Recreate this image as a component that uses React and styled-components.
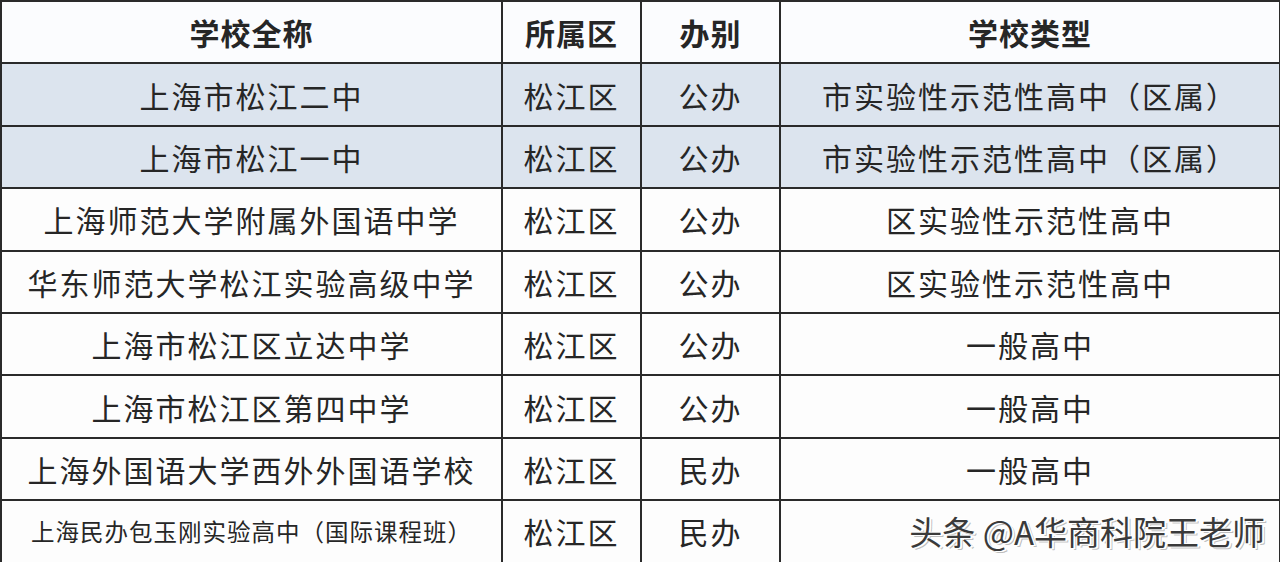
import React from "react";
import styled, { createGlobalStyle } from "styled-components";

const GlobalStyle = createGlobalStyle`
  html, body {
    margin: 0;
    padding: 0;
    background: #ffffff;
    overflow: hidden;
  }
  body {
    font-family: "Noto Sans CJK SC", "Noto Sans", sans-serif;
  }
`;

const Page = styled.div`
  width: 1280px;
  height: 562px;
  overflow: hidden;
`;

const Table = styled.table`
  width: 1279px;
  border-collapse: collapse;
  table-layout: fixed;
  color: #262626;
`;

const Row = styled.tr`
  height: 62.4px;
  background: ${({ $highlight }) => ($highlight ? "#dce4ee" : "#fdfdfd")};
`;

const HeadCell = styled.th`
  border: 2px solid #2a2a2a;
  font-size: 30px;
  font-weight: 700;
  text-align: center;
  padding: 0;
  letter-spacing: 1px;
  background: #fbfcfe;
`;

const Cell = styled.td`
  border: 2px solid #2a2a2a;
  font-size: ${({ $small }) => ($small ? "23.5px" : "30px")};
  letter-spacing: ${({ $small }) => ($small ? "1px" : "2px")};
  text-align: center;
  padding: 0;
  white-space: nowrap;
  line-height: 1;
`;

const WatermarkCell = styled(Cell)`
  text-align: right;
  padding-right: 14px;
`;

const Watermark = styled.span`
  font-size: 33px;
  letter-spacing: 0;
  color: #3a3a3a;
  text-shadow: 2px 1px 0 #ffffff, -1px -1px 0 #ffffff, 3px 2px 0 rgba(0, 0, 0, 0.25);
`;

const rows = [
  ["上海市松江二中", "松江区", "公办", "市实验性示范性高中（区属）", true],
  ["上海市松江一中", "松江区", "公办", "市实验性示范性高中（区属）", true],
  ["上海师范大学附属外国语中学", "松江区", "公办", "区实验性示范性高中"],
  ["华东师范大学松江实验高级中学", "松江区", "公办", "区实验性示范性高中"],
  ["上海市松江区立达中学", "松江区", "公办", "一般高中"],
  ["上海市松江区第四中学", "松江区", "公办", "一般高中"],
  ["上海外国语大学西外外国语学校", "松江区", "民办", "一般高中"],
];

const App = () => {
  return (
    <Page>
      <GlobalStyle />
      <Table>
        <colgroup>
          <col style={{ width: 501 }} />
          <col style={{ width: 139 }} />
          <col style={{ width: 139 }} />
          <col style={{ width: 500 }} />
        </colgroup>
        <thead>
          <Row>
            <HeadCell>学校全称</HeadCell>
            <HeadCell>所属区</HeadCell>
            <HeadCell>办别</HeadCell>
            <HeadCell>学校类型</HeadCell>
          </Row>
        </thead>
        <tbody>
          {rows.map(([name, area, kind, type, hl]) => (
            <Row key={name} $highlight={hl}>
              <Cell>{name}</Cell>
              <Cell>{area}</Cell>
              <Cell>{kind}</Cell>
              <Cell>{type}</Cell>
            </Row>
          ))}
          <Row>
            <Cell $small>上海民办包玉刚实验高中（国际课程班）</Cell>
            <Cell>松江区</Cell>
            <Cell>民办</Cell>
            <WatermarkCell>
              <Watermark>头条 @A华商科院王老师</Watermark>
            </WatermarkCell>
          </Row>
        </tbody>
      </Table>
    </Page>
  );
};

export default App;
